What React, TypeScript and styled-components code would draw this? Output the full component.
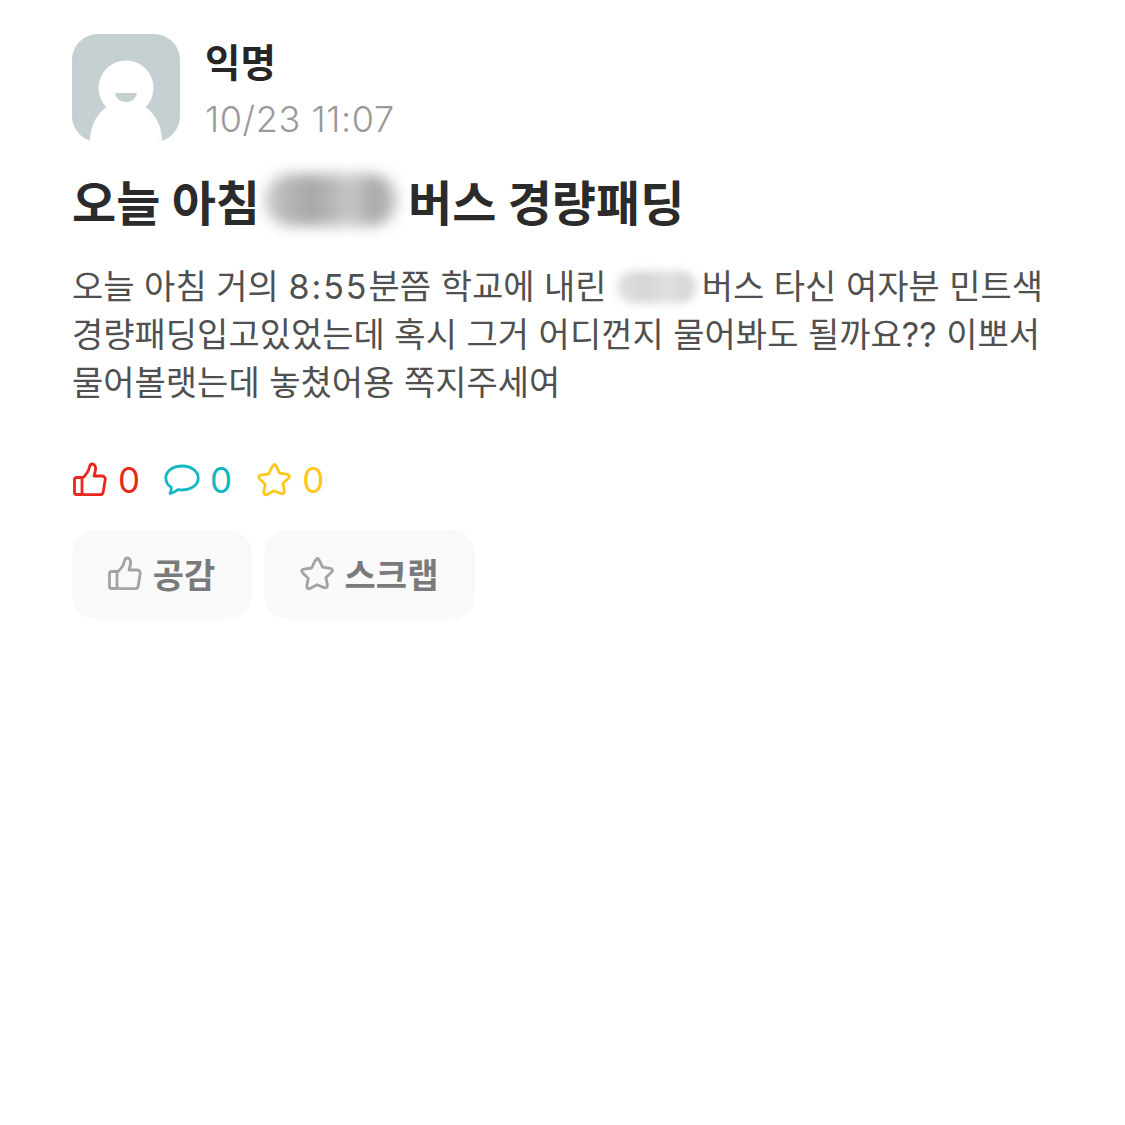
import styled, { createGlobalStyle } from 'styled-components';

const GlobalStyle = createGlobalStyle`
    html, body {
        margin: 0;
        padding: 0;
        background: #fff;
    }
    body {
        font-family: Inter, "Noto Sans CJK KR", sans-serif;
    }
`;

const Page = styled.div`
    width: 1125px;
    height: 1125px;
    box-sizing: border-box;
    padding: 34px 72px 0;
    overflow: hidden;
`;

const Header = styled.header`
    display: flex;
    gap: 25px;
    height: 108px;
`;

const Avatar = styled.div`
    width: 108px;
    height: 108px;
    border-radius: 26px;
    overflow: hidden;
    flex: none;
`;

const Meta = styled.div`
    display: flex;
    flex-direction: column;
`;

const Name = styled.div`
    font-size: 38.5px;
    font-weight: 700;
    line-height: 58px;
    color: #262626;
`;

const Time = styled.div`
    font-size: 36px;
    font-weight: 300;
    line-height: 54px;
    letter-spacing: 0.6px;
    color: #999;
`;

const Title = styled.h1`
    margin: 26px 0 0;
    display: flex;
    align-items: center;
    height: 64px;
    font-size: 48px;
    font-weight: 700;
    color: #2b2b2b;
    white-space: pre;
`;

const Smudge = styled.span<{ $w: number; $h: number; $edge: string; $core: string; $blur: number; $ml: number; $mr: number }>`
    display: inline-block;
    flex: none;
    width: ${p => p.$w}px;
    height: ${p => p.$h}px;
    margin: 0 ${p => p.$mr}px 0 ${p => p.$ml}px;
    border-radius: ${p => p.$h / 2}px;
    background: linear-gradient(90deg, ${p => p.$edge}, ${p => p.$core} 35%, ${p => p.$edge} 65%, ${p => p.$core} 85%, ${p => p.$edge});
    filter: blur(${p => p.$blur}px);
`;

const Body = styled.div`
    margin-top: 31px;
    font-size: 34px;
    font-weight: 400;
    line-height: 48px;
    color: #505050;
`;

const Line = styled.div`
    display: flex;
    align-items: center;
    white-space: pre;
`;

const Clock = styled.span`
    letter-spacing: 2px;
`;

const Counts = styled.div`
    margin-top: 49px;
    display: flex;
    align-items: center;
    height: 48px;
`;

const Count = styled.span<{ $color: string }>`
    display: flex;
    align-items: center;
    gap: 10px;
    margin-right: 24px;
    font-size: 35px;
    font-weight: 400;
    color: ${p => p.$color};
`;

const Actions = styled.div`
    margin-top: 26px;
    display: flex;
    gap: 12px;
`;

const ActionButton = styled.button<{ $w: number }>`
    width: ${p => p.$w}px;
    height: 89px;
    border: 0;
    border-radius: 24px;
    background: #f9f9f9;
    display: flex;
    align-items: center;
    justify-content: center;
    gap: 10px;
    padding: 0 2px 3px 0;
    font-family: inherit;
    font-size: 34px;
    font-weight: 700;
    color: #7a7a7a;
`;

const IconSlot = styled.span`
    display: flex;
    margin: 2px 0 0 0;
`;

function Thumb({ color }: { color: string }) {
    return (
        <svg width="36" height="36" viewBox="0 0 36 36" fill="none" stroke={color} strokeWidth="2.8" strokeLinejoin="round" strokeLinecap="round">
            <path d="M10 15.500H4.500a2 2 0 0 0-2 2v13a2 2 0 0 0 2 2H10" />
            <path d="M10 30.500V16.500c3.500-3 6.500-7 7.500-11.500.4-1.800 1.400-3 2.800-3 2 0 3.300 2 3.300 4.500 0 2.500-.8 5-1.600 7.500h8c2.200 0 3.600 1.600 3.200 3.800l-2 12.200c-.3 1.800-1.600 2.700-3.300 2.700H12.500c-1.500 0-2.500-1-2.500-2.200z" />
        </svg>
    );
}

function Bubble({ color }: { color: string }) {
    return (
        <svg width="36" height="36" viewBox="0 0 36 36" fill="none" stroke={color} strokeWidth="2.8" strokeLinejoin="round" strokeLinecap="round">
            <path d="M18 4C9 4 1.800 8.800 1.800 16c0 3.900 2 7.100 5.400 9.300.4 2-.3 4.300-1.200 6.200 3-.4 5.800-1.800 8-3.900 1.300.2 2.700.4 4 .4 9 0 16.200-4.800 16.200-12S27 4 18 4z" />
        </svg>
    );
}

function Star({ color }: { color: string }) {
    return (
        <svg width="36" height="36" viewBox="0 0 36 36" fill="none" stroke={color} strokeWidth="2.8" strokeLinejoin="round" strokeLinecap="round">
            <path d="M18 2.500c1 0 1.700.6 2.200 1.600l3.400 7.100 7.800 1.100c2 .3 2.700 2.300 1.300 3.700l-5.700 5.400 1.400 7.800c.3 2-1.500 3.300-3.300 2.400L18 28.700l-6.900 3.700c-1.800.9-3.600-.4-3.300-2.400l1.400-7.800-5.700-5.400c-1.400-1.400-.7-3.400 1.300-3.700l7.800-1.100 3.400-7.100c.5-1 1.200-1.600 2.200-1.600z" />
        </svg>
    );
}

function Silhouette() {
    return (
        <svg width="108" height="108" viewBox="0 0 108 108">
            <rect width="108" height="108" fill="#c6cfd2" />
            <path d="M18 108c0-20 10-33 24-39h24c14 6 24 19 24 39z" fill="#fff" />
            <circle cx="54" cy="54" r="27.500" fill="#fff" />
            <path d="M43 59h22c-1 6-5.500 9-11 9s-10-3-11-9z" fill="#c6cfd2" />
        </svg>
    );
}

export default function App() {
    return (
        <Page>
            <GlobalStyle />
            <Header>
                <Avatar>
                    <Silhouette />
                </Avatar>
                <Meta>
                    <Name>익명</Name>
                    <Time>10/23 11:07</Time>
                </Meta>
            </Header>
            <Title>
                오늘 아침<Smudge $w={132} $h={52} $edge="#c8c8c8" $core="#a6a6a6" $blur={7} $ml={5} $mr={11} />버스 경량패딩
            </Title>
            <Body>
                <Line>
                    오늘 아침 거의 <Clock>8:55</Clock>분쯤 학교에 내린<Smudge $w={80} $h={32} $edge="#e0e0e0" $core="#d6d6d6" $blur={4} $ml={10} $mr={5} />버스 타신 여자분 민트색
                </Line>
                <Line>경량패딩입고있었는데 혹시 그거 어디껀지 물어봐도 될까요?? 이뽀서</Line>
                <Line>물어볼랫는데 놓쳤어용 쪽지주세여</Line>
            </Body>
            <Counts>
                <Count $color="#e8281e">
                    <Thumb color="#e8281e" />0
                </Count>
                <Count $color="#14b8c0">
                    <Bubble color="#14b8c0" />0
                </Count>
                <Count $color="#fbc91d">
                    <Star color="#fbc91d" />0
                </Count>
            </Counts>
            <Actions>
                <ActionButton $w={180}>
                    <IconSlot>
                        <Thumb color="#a3a3a3" />
                    </IconSlot>
                    공감
                </ActionButton>
                <ActionButton $w={211}>
                    <IconSlot>
                        <Star color="#a3a3a3" />
                    </IconSlot>
                    스크랩
                </ActionButton>
            </Actions>
        </Page>
    );
}
